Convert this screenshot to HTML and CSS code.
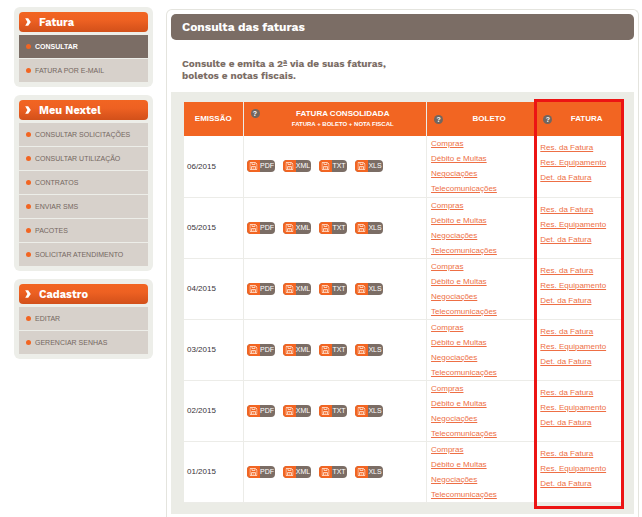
FILE: index.html
```html
<!DOCTYPE html>
<html lang="pt-BR">
<head>
<meta charset="utf-8">
<title>Consulta das faturas</title>
<link rel="stylesheet" href="styles.css">
</head>
<body>
<svg class="defs" aria-hidden="true">
  <symbol id="arrow" viewBox="0 0 6 8"><path d="M0.2 0.2H3.200L5.800 4 3.200 7.800H0.200L2.400 4z" fill="#fff"/></symbol>
  <symbol id="save" viewBox="0 0 8 8"><path d="M0.5 0.5H6L7.5 2V7.5H0.5zM2.5 0.5V2.5H5.5V0.5M2 7.5V4.5H6V7.5M3 6H5" fill="none" stroke="#ffd9c4" stroke-width="0.9"/></symbol>
</svg>
<div class="page">
  <nav class="sidebar">
    <section class="menu">
      <h2><svg class="arrow"><use href="#arrow"/></svg>Fatura</h2>
      <ul>
        <li><a class="active" href="#">CONSULTAR</a></li>
        <li><a href="#">FATURA POR E-MAIL</a></li>
      </ul>
    </section>
    <section class="menu">
      <h2><svg class="arrow"><use href="#arrow"/></svg>Meu Nextel</h2>
      <ul>
        <li><a href="#">CONSULTAR SOLICITAÇÕES</a></li>
        <li><a href="#">CONSULTAR UTILIZAÇÃO</a></li>
        <li><a href="#">CONTRATOS</a></li>
        <li><a href="#">ENVIAR SMS</a></li>
        <li><a href="#">PACOTES</a></li>
        <li><a href="#">SOLICITAR ATENDIMENTO</a></li>
      </ul>
    </section>
    <section class="menu">
      <h2><svg class="arrow"><use href="#arrow"/></svg>Cadastro</h2>
      <ul>
        <li><a href="#">EDITAR</a></li>
        <li><a href="#">GERENCIAR SENHAS</a></li>
      </ul>
    </section>
  </nav>
  <main class="content">
    <h1>Consulta das faturas</h1>
    <p class="intro">Consulte e emita a 2ª via de suas faturas,<br>boletos e notas fiscais.</p>
    <div class="panel">
      <div class="table-wrap">
        <table>
          <colgroup><col class="col-date"><col class="col-files"><col class="col-boleto"><col class="col-fatura"></colgroup>
          <thead>
            <tr>
              <th>EMISSÃO</th>
              <th><div class="head top"><span class="help">?</span><span class="label">FATURA CONSOLIDADA<small>FATURA + BOLETO + NOTA FISCAL</small></span></div></th>
              <th><div class="head"><span class="help">?</span><span class="label">BOLETO</span></div></th>
              <th><div class="head"><span class="help">?</span><span class="label">FATURA</span></div></th>
            </tr>
          </thead>
          <tbody id="rows"></tbody>
        </table>
        <div class="highlight"></div>
      </div>
    </div>
  </main>
</div>
<script src="rows.js"></script>
</body>
</html>
```
FILE: styles.css
```css
* { box-sizing: border-box; }
body {
  margin: 0;
  background: #fff;
  font-family: "Liberation Sans", Arial, sans-serif;
  font-size: 8px;
  color: #7b6d65;
}
h1, h2, p, ul { margin: 0; padding: 0; }
.defs { position: absolute; width: 0; height: 0; }
.page {
  display: flex;
  gap: 13px;
  min-height: 100vh;
  padding: 7px 3px 0 14px;
}
.sidebar {
  flex: none;
  width: 139px;
  display: flex;
  flex-direction: column;
  gap: 8px;
}
.menu {
  padding: 5px;
  border-radius: 6px;
  background: #edeee9;
}
.menu h2 {
  display: flex;
  align-items: center;
  gap: 8px;
  height: 20px;
  padding: 0 6px;
  border-radius: 4px;
  background: linear-gradient(#f26522, #ee6122 40%, #d2501a);
  color: #fff;
  font: 700 11px "Work Sans", Inter, sans-serif;
}
.arrow { width: 6px; height: 8px; }
.menu ul {
  display: grid;
  gap: 1px;
  margin-top: 3px;
  list-style: none;
}
.menu a {
  display: flex;
  align-items: center;
  gap: 4px;
  height: 23px;
  padding: 0 7px;
  background: #d7d1cb;
  color: #75675f;
  font-size: 7px;
  text-decoration: none;
}
.menu a::before {
  content: "";
  width: 5px;
  height: 5px;
  border-radius: 50%;
  background: #f26522;
}
.menu a.active { background: #7b6d65; color: #fff; font-weight: 700; }
.content {
  flex: 1;
  margin-top: 2px;
  padding: 4px 4px 0;
  border: 1px solid #e4e4de;
  border-bottom: 0;
  border-radius: 6px 6px 0 0;
}
.content h1 {
  padding: 0 11px;
  border-radius: 5px;
  background: #7b6d65;
  color: #fff;
  font: 700 12px/26px "Work Sans", Inter, sans-serif;
}
.intro {
  padding: 18px 11px 10px;
  font: 700 10px/12px "Work Sans", Inter, sans-serif;
}
.panel {
  padding: 10px 13px 11px;
  background: #ebece6;
}
.table-wrap { position: relative; }
table {
  width: 100%;
  table-layout: fixed;
  border-collapse: collapse;
  background: #fff;
}
.col-date { width: 59px; }
.col-files { width: 42%; }
.col-boleto { width: 25%; }
th {
  height: 34px;
  padding: 0;
  background: #f26522;
  color: #fff;
  font-size: 8px;
  line-height: 10px;
}
th + th, td + td { border-left: 1px solid #ecece8; }
.head {
  display: flex;
  align-items: center;
  padding-left: 7px;
}
.head.top { align-items: flex-start; }
.label { flex: 1; }
.label small { display: block; font-size: 6px; }
.help {
  width: 9px;
  height: 9px;
  border-radius: 50%;
  background: #71665f;
  font-size: 7px;
  line-height: 9px;
}
td {
  height: 61px;
  padding: 0 3px;
  border-bottom: 1px solid #ecece8;
}
.date { color: #39343a; }
.files {
  display: flex;
  gap: 8px;
}
.file {
  display: flex;
  width: 28px;
  height: 12px;
  padding: 0;
  border: 0;
  border-radius: 4px;
  overflow: hidden;
  background: #7b6d65;
  color: #fff;
  font: 7px/12px "Liberation Sans", Arial, sans-serif;
}
.file svg {
  flex: none;
  width: 13px;
  height: 12px;
  padding: 2px;
  background: #f26522;
}
.file span { flex: 1; text-align: center; }
.links {
  padding: 0 4px;
  line-height: 15px;
  vertical-align: top;
}
.links a { display: table; color: #ee6f45; }
.links.invoice { padding-top: 4px; }
.highlight {
  position: absolute;
  top: -3px;
  right: -3px;
  bottom: -6px;
  width: 90px;
  border: 3px solid #ec1414;
  pointer-events: none;
}
```
FILE: rows.js
```js
const months = ["06/2015", "05/2015", "04/2015", "03/2015", "02/2015", "01/2015"];
const files = ["PDF", "XML", "TXT", "XLS"];
const boletos = ["Compras", "Débito e Multas", "Negociações", "Telecomunicações"];
const invoices = ["Res. da Fatura", "Res. Equipamento", "Det. da Fatura"];
const links = (items) => items.map((t) => `<a href="#">${t}</a>`).join("");
const buttons = files.map((t) =>
  `<button class="file" type="button"><svg viewBox="0 0 8 8"><use href="#save"/></svg><span>${t}</span></button>`
).join("");
document.getElementById("rows").innerHTML = months.map((m) => `<tr>
  <td class="date">${m}</td>
  <td><div class="files">${buttons}</div></td>
  <td class="links">${links(boletos)}</td>
  <td class="links invoice">${links(invoices)}</td>
</tr>`).join("");
```
